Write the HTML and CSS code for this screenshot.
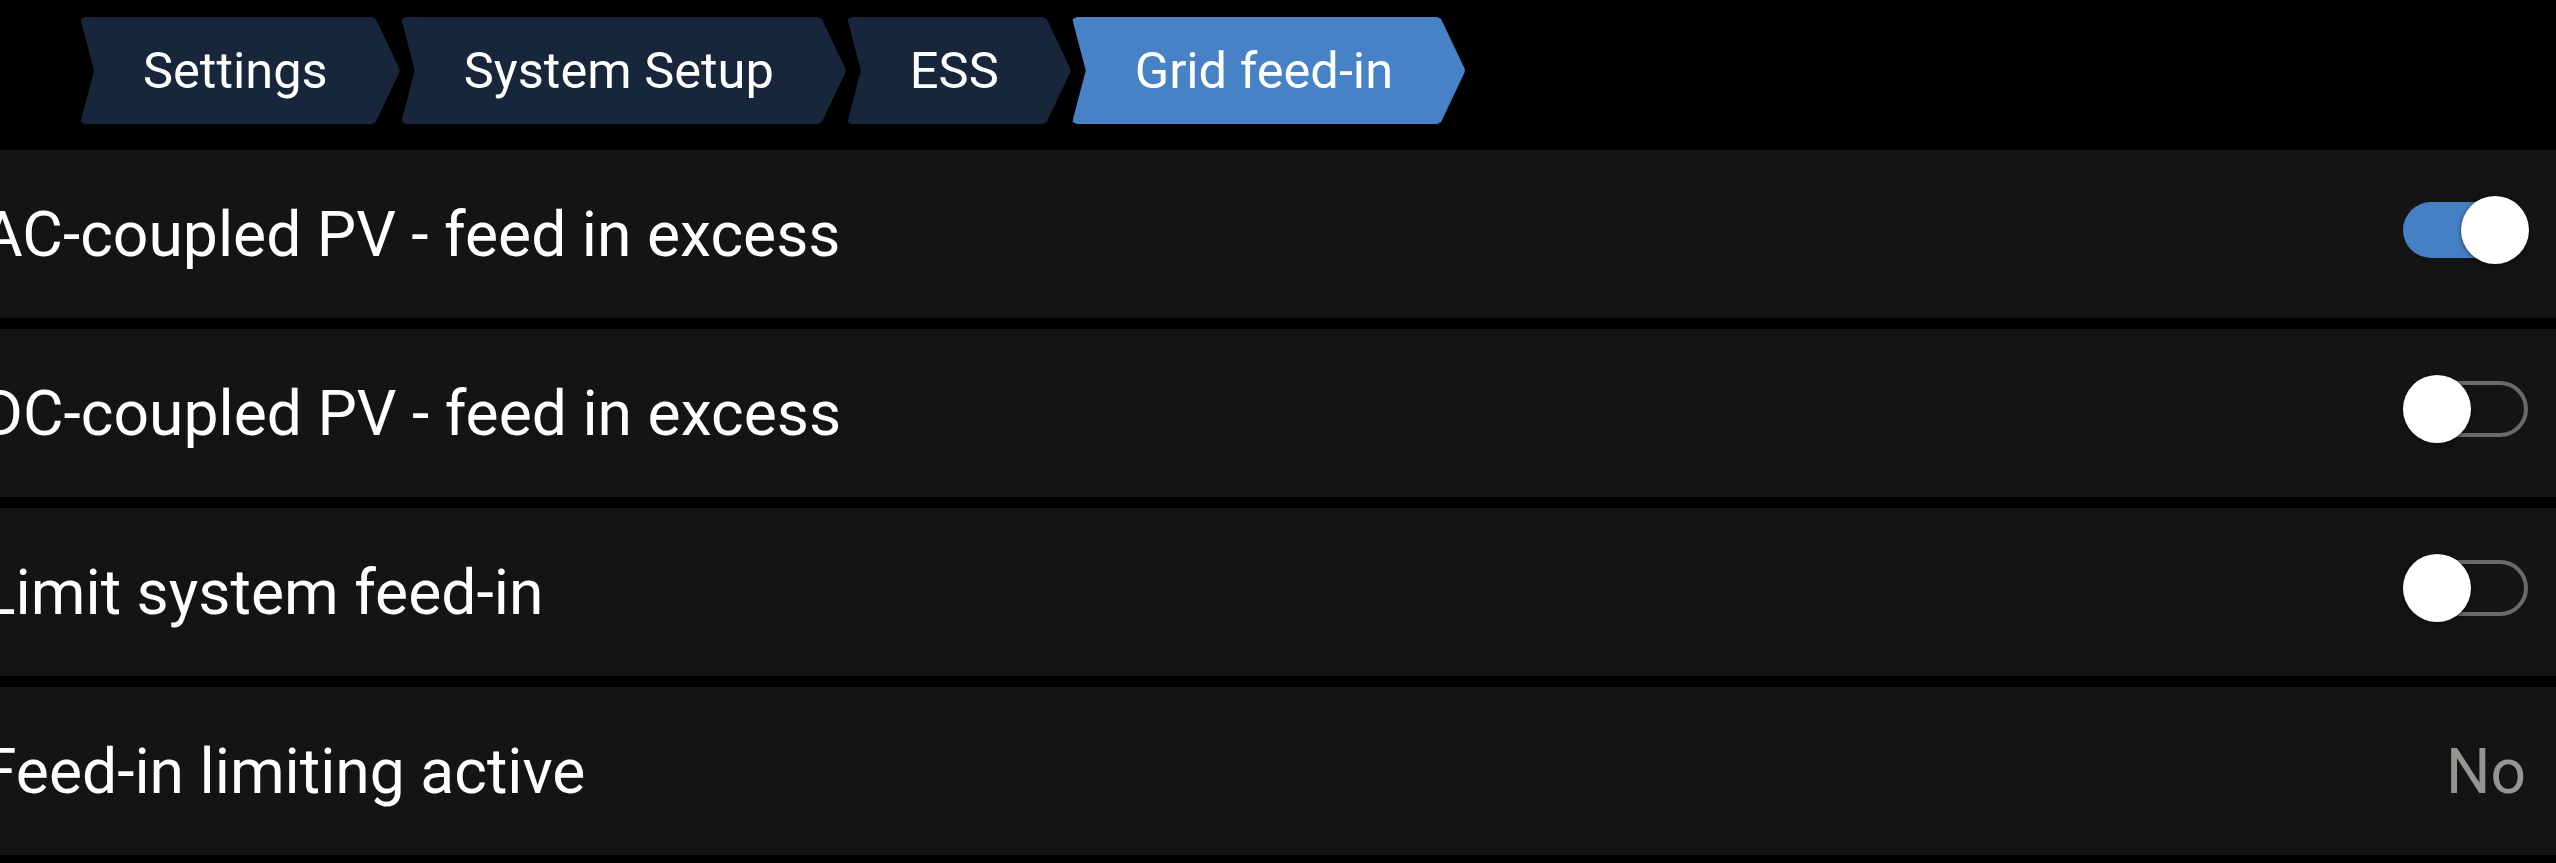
FILE: index.html
```html
<!DOCTYPE html>
<html>
<head>
<meta charset="utf-8">
<link rel="stylesheet" href="styles.css">
</head>
<body>
<div class="page">
  <nav class="crumbs">
    <div class="crumb">Settings</div>
    <div class="crumb">System Setup</div>
    <div class="crumb">ESS</div>
    <div class="crumb active">Grid feed-in</div>
  </nav>
  <div class="list">
    <div class="row">
      <span class="label">AC-coupled PV - feed in excess</span>
      <span class="switch on"><span class="knob"></span></span>
    </div>
    <div class="row">
      <span class="label">DC-coupled PV - feed in excess</span>
      <span class="switch off"><span class="knob"></span></span>
    </div>
    <div class="row">
      <span class="label">Limit system feed-in</span>
      <span class="switch off"><span class="knob"></span></span>
    </div>
    <div class="row">
      <span class="label">Feed-in limiting active</span>
      <span class="value">No</span>
    </div>
  </div>
</div>
</body>
</html>
```
FILE: styles.css
```css
html, body {
  margin: 0;
  padding: 0;
  background: #000;
  overflow: hidden;
}
body {
  font-family: Roboto, "Liberation Sans", sans-serif;
  color: #fff;
}
.page {
  width: 2556px;
  height: 863px;
  display: flex;
  flex-direction: column;
}
.crumbs {
  display: flex;
  gap: 1px;
  padding: 17px 0 0 80px;
  height: 107px;
}
.crumb {
  height: 107px;
  display: flex;
  align-items: center;
  padding: 0 72px 0 63px;
  font-size: 50.6px;
  background: #17263a;
  color: #fff;
  clip-path: polygon(5px 0, calc(100% - 28px) 0, calc(100% - 24px) 2px, calc(100% - 1px) calc(50% - 3px), 100% 50%, calc(100% - 1px) calc(50% + 3px), calc(100% - 24px) calc(100% - 2px), calc(100% - 28px) 100%, 5px 100%, 1px calc(100% - 2px), 1.3px calc(100% - 5px), 13px calc(50% + 4px), 14px 50%, 13px calc(50% - 4px), 1.3px 5px, 1px 2px);
}
.crumb.active {
  background: #4682c5;
}
.list {
  display: flex;
  flex-direction: column;
  gap: 11px;
  margin-top: 26px;
}
.row {
  height: 168px;
  background: #141414;
  display: flex;
  align-items: center;
  justify-content: space-between;
  padding: 0 28px 0 0;
}
.label {
  font-size: 62.4px;
  margin-left: -18px;
  white-space: nowrap;
}
.value {
  font-size: 62.4px;
  color: #959591;
  margin-right: 2px;
}
.switch {
  position: relative;
  width: 125px;
  height: 56px;
  border-radius: 28px;
  box-sizing: border-box;
  margin-bottom: 8px;
  display: flex;
  align-items: center;
}
.switch.on {
  background: #4580c4;
  justify-content: flex-end;
}
.switch.off {
  border: 4px solid #6a6a66;
  justify-content: flex-start;
}
.knob {
  width: 68px;
  height: 68px;
  border-radius: 50%;
  background: #fff;
  box-shadow: 0 1px 4px rgba(0,0,0,0.6);
  flex: none;
}
.switch.on .knob {
  margin-right: -1px;
}
.switch.off .knob {
  margin-left: -4px;
}
```
